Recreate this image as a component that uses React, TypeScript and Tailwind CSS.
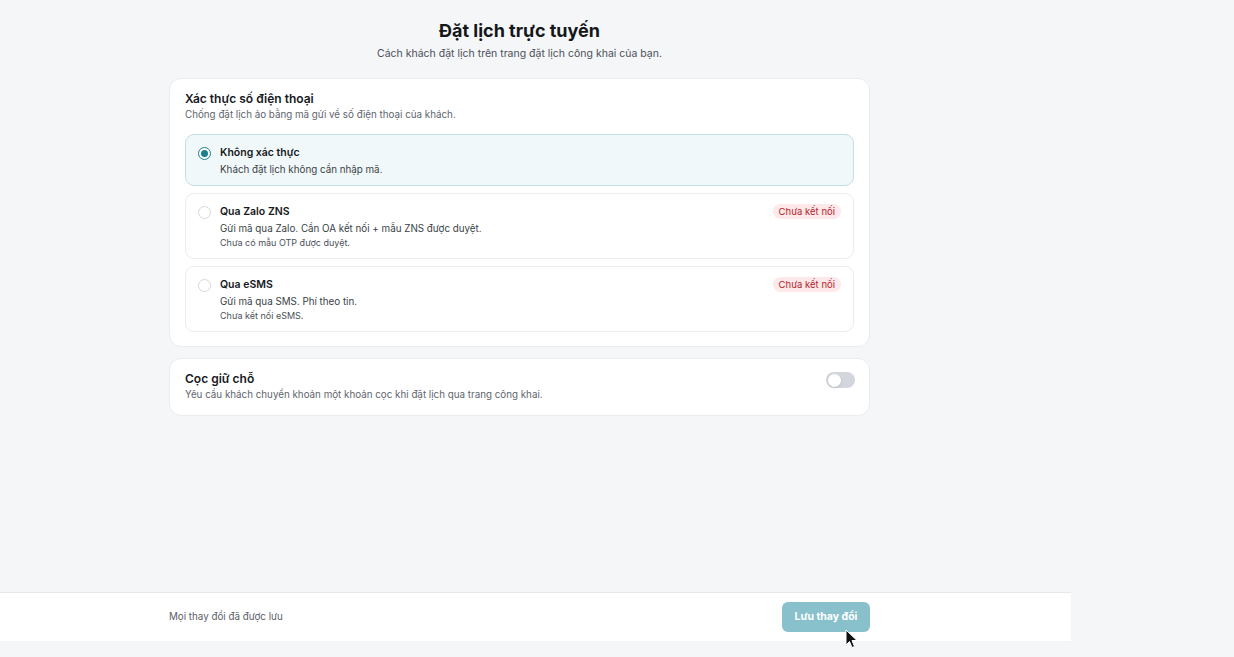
import { useState } from 'react';

type Method = 'none' | 'zalo' | 'esms';

const methods: {
  id: Method;
  title: string;
  desc: string;
  note?: string;
  disconnected?: boolean;
}[] = [
  { id: 'none', title: 'Không xác thực', desc: 'Khách đặt lịch không cần nhập mã.' },
  {
    id: 'zalo',
    title: 'Qua Zalo ZNS',
    desc: 'Gửi mã qua Zalo. Cần OA kết nối + mẫu ZNS được duyệt.',
    note: 'Chưa có mẫu OTP được duyệt.',
    disconnected: true,
  },
  {
    id: 'esms',
    title: 'Qua eSMS',
    desc: 'Gửi mã qua SMS. Phí theo tin.',
    note: 'Chưa kết nối eSMS.',
    disconnected: true,
  },
];

const Radio = ({ checked }: { checked: boolean }) => (
  <span
    className={`mt-[2px] flex h-[13px] w-[13px] shrink-0 items-center justify-center rounded-full border bg-white ${
      checked ? 'border-[#1b7f8c]' : 'border-[#d4d7dc]'
    }`}
  >
    {checked && <span className="h-[7px] w-[7px] rounded-full bg-[#1b7f8c]" />}
  </span>
);

export default function App() {
  const [method, setMethod] = useState<Method>('none');
  const [deposit, setDeposit] = useState(false);

  return (
    <div className="flex h-[657px] flex-col bg-[#f5f6f8] font-['Inter',sans-serif] text-[#1f2328]">
      <div className="w-[1071px] flex-1">
        <div className="ml-[169px] w-[701px] pt-[19px]">
          <h1 className="text-center text-[18px] leading-[24px] font-bold text-[#14171a]">
            Đặt lịch trực tuyến
          </h1>
          <p className="mt-[4px] text-center text-[10.5px] leading-[14px] text-[#4b5058]">
            Cách khách đặt lịch trên trang đặt lịch công khai của bạn.
          </p>

          <section className="mt-[17px] rounded-[12px] border border-[#eaecef] bg-white px-[15px] pt-[11px] pb-[14px]">
            <h2 className="text-[12px] leading-[17px] font-semibold text-[#16191d]">
              Xác thực số điện thoại
            </h2>
            <p className="mt-[1px] text-[9.8px] leading-[14px] text-[#60656d]">
              Chống đặt lịch ảo bằng mã gửi về số điện thoại của khách.
            </p>

            <div className="mt-[12px] flex flex-col gap-[7px]">
              {methods.map((m) => {
                const active = method === m.id;
                return (
                  <button
                    key={m.id}
                    type="button"
                    onClick={() => setMethod(m.id)}
                    className={`flex items-start gap-[9px] rounded-[9px] border px-[12px] pt-[10px] pb-[8px] text-left ${
                      active
                        ? 'border-[#c3e0e4] bg-[#f1f8f9]'
                        : 'border-[#eaecef] bg-white'
                    }`}
                  >
                    <Radio checked={active} />
                    <div className="flex-1">
                      <div className="flex items-start justify-between">
                        <div className="text-[10.5px] leading-[15px] font-semibold text-[#16191d]">
                          {m.title}
                        </div>
                        {m.disconnected && (
                          <span className="rounded-full bg-[#fde9e9] px-[6px] text-[9.5px] leading-[15px] text-[#b4232c]">
                            Chưa kết nối
                          </span>
                        )}
                      </div>
                      <div className="mt-[2px] text-[9.8px] leading-[15px] text-[#3a3f46]">
                        {m.desc}
                      </div>
                      {m.note && (
                        <div className="text-[9px] leading-[14px] text-[#4b5058]">
                          {m.note}
                        </div>
                      )}
                    </div>
                  </button>
                );
              })}
            </div>
          </section>

          <section className="mt-[11px] flex items-start justify-between rounded-[12px] border border-[#eaecef] bg-white pt-[11px] pr-[14px] pb-[13px] pl-[15px]">
            <div>
              <h2 className="text-[12px] leading-[17px] font-semibold text-[#16191d]">
                Cọc giữ chỗ
              </h2>
              <p className="mt-[1px] text-[9.8px] leading-[14px] text-[#60656d]">
                Yêu cầu khách chuyển khoản một khoản cọc khi đặt lịch qua trang công khai.
              </p>
            </div>
            <button
              type="button"
              onClick={() => setDeposit(!deposit)}
              className={`mt-[2px] flex h-[16px] w-[29px] items-center rounded-full p-[2px] ${
                deposit ? 'justify-end bg-[#1b7f8c]' : 'justify-start bg-[#d3d6dc]'
              }`}
            >
              <span className="h-[13px] w-[13px] rounded-full bg-white shadow-sm" />
            </button>
          </section>
        </div>
      </div>

      <footer className="mb-[16px] flex h-[49px] w-[1071px] items-center border-t border-[#e6e8ec] bg-white">
        <div className="ml-[169px] flex w-[701px] items-center justify-between">
          <span className="text-[9.8px] text-[#5b6068]">Mọi thay đổi đã được lưu</span>
          <div className="relative">
            <button
              type="button"
              className="h-[30px] w-[88px] rounded-[6px] bg-[#88c1cb] text-[10.5px] font-bold text-white"
            >
              Lưu thay đổi
            </button>
            <svg
              className="absolute top-[27px] left-[63px]"
              width="14"
              height="20"
              viewBox="0 0 14 20"
            >
              <path
                d="M1 1 L1 16 L4.5 12.5 L7 18.5 L9.5 17.5 L7 11.5 L12 11.5 Z"
                fill="#111"
                stroke="#fff"
                strokeWidth="1"
                strokeLinejoin="round"
              />
            </svg>
          </div>
        </div>
      </footer>
    </div>
  );
}
